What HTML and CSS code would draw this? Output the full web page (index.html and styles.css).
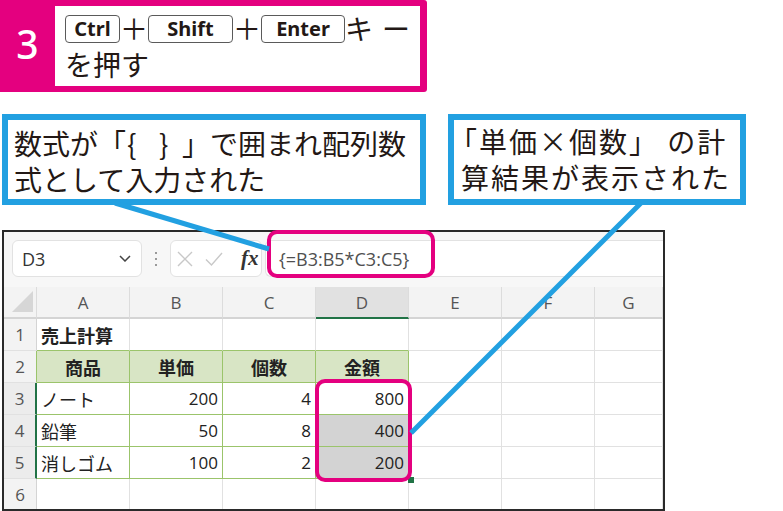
FILE: index.html
```html
<!DOCTYPE html>
<html lang="ja">
<head>
<meta charset="utf-8">
<link rel="stylesheet" href="styles.css">
</head>
<body>
<div class="page">
  <div class="step">
    <div class="step-num">3</div>
    <div class="step-body"><span class="key key-ctrl">Ctrl</span>＋<span class="key key-shift">Shift</span>＋<span class="key key-enter">Enter</span>キ<span class="gap-l">ー</span><br>を押す</div>
  </div>

  <div class="callouts">
    <div class="callout c1">数式が「<span class="br-o">{</span><span class="br-c">}</span>」で囲まれ配列数<br>式として入力された</div>
    <div class="callout c2">「単価×個数」 の計<br>算結果が表示された</div>
  </div>

  <div class="excel">
    <div class="toolbar">
      <div class="namebox"><span>D3</span>
        <svg class="chev" width="12" height="7" viewBox="0 0 12 7"><path d="M1 1L6 6L11 1" fill="none" stroke="#444" stroke-width="1.5"/></svg>
      </div>
      <div class="dots"><i></i><i></i><i></i></div>
      <div class="fxbox">
        <svg width="16" height="16" viewBox="0 0 16 16"><path d="M1 1L15 15M15 1L1 15" stroke="#c8c8c8" stroke-width="1.4"/></svg>
        <svg width="18" height="16" viewBox="0 0 18 16"><path d="M1 8.5L6.5 14L17 2" fill="none" stroke="#c8c8c8" stroke-width="1.4"/></svg>
        <span class="fx">fx</span>
      </div>
      <div class="formula">{=B3:B5*C3:C5}</div>
    </div>

    <div class="sheet">
      <div class="c ch corner"><svg width="21" height="21" viewBox="0 0 21 21"><polygon points="21,0 21,21 0,21" fill="#d6d6d6"/></svg></div>
      <div class="c ch">A</div><div class="c ch">B</div><div class="c ch">C</div><div class="c ch ch-sel">D</div><div class="c ch">E</div><div class="c ch">F</div><div class="c ch">G</div>

      <div class="c rh">1</div>
      <div class="c t1 bold">売上計算</div><div class="c t1"></div><div class="c t1"></div><div class="c t1"></div><div class="c"></div><div class="c"></div><div class="c"></div>

      <div class="c rh rh-t">2</div>
      <div class="c tb th">商品</div><div class="c tb th">単価</div><div class="c tb th">個数</div><div class="c tb th">金額</div><div class="c"></div><div class="c"></div><div class="c"></div>

      <div class="c rh rh-sel">3</div>
      <div class="c tb">ノート</div><div class="c tb num">200</div><div class="c tb num">4</div><div class="c tb num">800</div><div class="c"></div><div class="c"></div><div class="c"></div>

      <div class="c rh rh-sel">4</div>
      <div class="c tb">鉛筆</div><div class="c tb num">50</div><div class="c tb num">8</div><div class="c tb num sel">400</div><div class="c"></div><div class="c"></div><div class="c"></div>

      <div class="c rh rh-sel">5</div>
      <div class="c tb">消しゴム</div><div class="c tb num">100</div><div class="c tb num">2</div><div class="c tb num sel">200</div><div class="c"></div><div class="c"></div><div class="c"></div>

      <div class="c rh">6</div>
      <div class="c"></div><div class="c"></div><div class="c"></div><div class="c"></div><div class="c"></div><div class="c"></div><div class="c"></div>
    </div>
  </div>

  <div class="fill-handle"></div>
  <div class="hl hl-formula"></div>
  <div class="hl hl-range"></div>

  <svg class="pointers" width="783" height="511" viewBox="0 0 783 511">
    <line x1="115" y1="203" x2="269" y2="249" stroke="#22a0e1" stroke-width="5"/>
    <line x1="641" y1="203" x2="411" y2="433" stroke="#22a0e1" stroke-width="5"/>
  </svg>
</div>
</body>
</html>
```

FILE: styles.css
```css
* { box-sizing: border-box; }
html, body { margin: 0; padding: 0; }
body {
  width: 783px;
  height: 511px;
  overflow: hidden;
  background: #fff;
  font-family: "Noto Sans CJK JP", sans-serif;
  color: #231815;
}
.page { position: relative; width: 783px; height: 511px; }

/* step box */
.step {
  display: flex;
  width: 427px;
  height: 92px;
  background: #e4007f;
  padding: 6px 7px 6px 0;
  border-radius: 0 3px 3px 0;
}
.step-num {
  width: 55px;
  flex: none;
  display: flex;
  align-items: center;
  justify-content: center;
  color: #fff;
  font-family: "Noto Sans", sans-serif;
  font-weight: 500;
  font-size: 39px;
  padding-bottom: 6px;
}
.step-body {
  flex: 1;
  background: #fff;
  padding: 4px 0 0 10px;
  font-size: 28px;
  line-height: 36px;
  white-space: nowrap;
}
.key {
  display: inline-block;
  vertical-align: top;
  margin-top: 5px;
  height: 28px;
  border: 1px solid #5a5a5a;
  border-radius: 4px;
  background: #fff;
  font-family: "Noto Sans", sans-serif;
  font-weight: 700;
  font-size: 20px;
  line-height: 25px;
  text-align: center;
  color: #231815;
}
.key-ctrl { width: 55px; }
.key-shift { width: 85px; }
.key-enter { width: 84px; }
.gap-l { margin-left: 9px; }

/* callouts */
.callouts {
  display: flex;
  margin-top: 22px;
  height: 91px;
}
.callout {
  height: 91px;
  border: 6px solid #22a0e1;
  background: #fff;
  font-size: 28px;
  line-height: 36px;
  color: #231815;
  white-space: nowrap;
}
.c1 { width: 424px; margin-left: 2px; padding: 5px 0 0 6px; }
.c2 { width: 298px; margin-left: 22px; padding: 3px 0 0 7px; letter-spacing: 2px; text-indent: -12px; }
.br-o { display: inline-block; width: 33px; padding-left: 1px; line-height: 30px; }
.br-c { display: inline-block; width: 23px; line-height: 30px; }

/* excel window */
.excel {
  margin: 25px 0 0 2px;
  width: 663px;
  height: 281px;
  border: 2px solid #2a2a2a;
  background: #fff;
  overflow: hidden;
}
.toolbar {
  height: 55px;
  background: #f7f7f7;
  display: flex;
  align-items: flex-start;
  padding: 8px 0 0 8px;
  font-family: "Open Sans", "Noto Sans CJK JP", sans-serif;
}
.namebox {
  width: 130px;
  height: 37px;
  background: #fff;
  border: 1px solid #e2e2e2;
  border-radius: 6px;
  display: flex;
  align-items: center;
  justify-content: space-between;
  padding: 0 10px 0 9px;
  font-size: 18px;
  color: #333;
}
.dots {
  width: 28px;
  height: 37px;
  display: flex;
  flex-direction: column;
  align-items: center;
  justify-content: center;
  gap: 4px;
}
.dots i { width: 2px; height: 2px; background: #9a9a9a; display: block; }
.fxbox {
  width: 92px;
  height: 37px;
  background: #fff;
  border: 1px solid #e2e2e2;
  border-radius: 6px;
  display: flex;
  align-items: center;
  padding-left: 6px;
  gap: 12px;
}
.fx {
  font-family: "Liberation Serif", serif;
  font-style: italic;
  font-weight: 700;
  font-size: 21px;
  color: #333;
  margin-left: 6px;
}
.formula {
  flex: 1;
  height: 37px;
  margin-left: 3px;
  background: #fff;
  border: 1px solid #e2e2e2;
  border-right: none;
  border-radius: 6px 0 0 6px;
  padding-left: 13px;
  display: flex;
  align-items: center;
  font-size: 18px;
  color: #505050;
}

/* sheet grid */
.sheet {
  display: grid;
  grid-template-columns: 33px repeat(6, 93px) 1fr;
  grid-auto-rows: 32px;
  font-family: "Open Sans", "Noto Sans CJK JP", sans-serif;
  font-size: 18px;
  color: #222;
}
.c {
  border-right: 1px solid #e1e1e1;
  border-bottom: 1px solid #e1e1e1;
  display: flex;
  align-items: center;
  padding: 0 4px 0 4px;
  white-space: nowrap;
  overflow: hidden;
}
.ch {
  background: #f3f3f3;
  justify-content: center;
  color: #555;
  font-size: 17px;
  border-right-color: #dcdcdc;
  border-bottom: 2px solid #d4d4d4;
}
.ch-sel { background: #e1e1e1; border-bottom: 2px solid #217346; }
.corner { justify-content: flex-end; align-items: flex-end; padding: 0 3px 5px 0; }
.rh {
  background: #f3f3f3;
  justify-content: center;
  color: #555;
  font-size: 17px;
  padding: 0;
  border-right-color: #d4d4d4;
}
.rh-t { border-right-color: #9bc46b; }
.rh-sel { border-right: 2px solid #217346; background: #ececec; }
.t1 { border-bottom-color: #9bc46b; }
.bold { font-weight: 700; }
.tb { border-right-color: #9bc46b; border-bottom-color: #9bc46b; }
.th { background: #d8e5c5; font-weight: 700; justify-content: center; }
.num { justify-content: flex-end; font-size: 17px; }
.sel { background: #d3d3d3; }

/* overlays */
.fill-handle {
  position: absolute;
  left: 408px;
  top: 477px;
  width: 6px;
  height: 6px;
  background: #217346;
}
.hl {
  position: absolute;
  border: 4px solid #e4007f;
  border-radius: 10px;
}
.hl-formula { left: 267px; top: 230px; width: 168px; height: 48px; }
.hl-range { left: 315px; top: 379px; width: 97px; height: 103px; }
.pointers { position: absolute; left: 0; top: 0; pointer-events: none; }
```
